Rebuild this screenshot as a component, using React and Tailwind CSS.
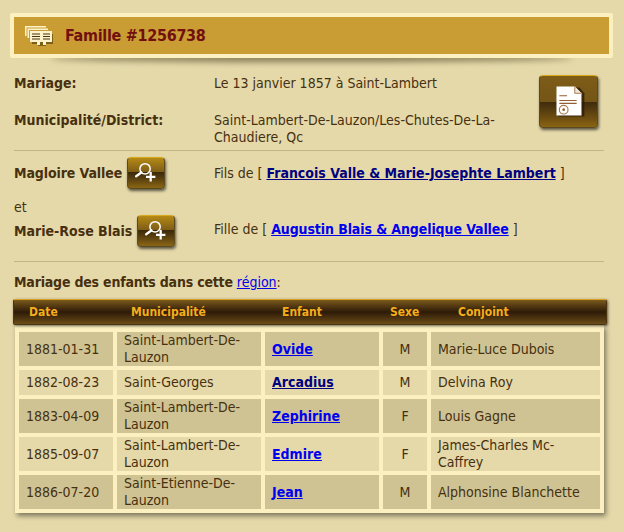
const font = { fontFamily: "'DejaVu Sans Condensed', 'DejaVu Sans', sans-serif" };

const enfants = [
  { date: "1881-01-31", lieu: "Saint-Lambert-De-Lauzon", nom: "Ovide", sexe: "M", conjoint: "Marie-Luce Dubois" },
  { date: "1882-08-23", lieu: "Saint-Georges", nom: "Arcadius", sexe: "M", conjoint: "Delvina Roy", visited: true },
  { date: "1883-04-09", lieu: "Saint-Lambert-De-Lauzon", nom: "Zephirine", sexe: "F", conjoint: "Louis Gagne" },
  { date: "1885-09-07", lieu: "Saint-Lambert-De-Lauzon", nom: "Edmire", sexe: "F", conjoint: "James-Charles Mc-Caffrey" },
  { date: "1886-07-20", lieu: "Saint-Etienne-De-Lauzon", nom: "Jean", sexe: "M", conjoint: "Alphonsine Blanchette" },
];

function ZoomButton() {
  return (
    <span className="relative inline-block h-[32px] w-[38px] shrink-0 overflow-hidden rounded-[4px] border border-[#5b4a20] border-t-[#d9a91c] bg-gradient-to-b from-[#b58a14] via-[#7a5a16] to-[#5d4310] shadow-[1px_2px_3px_rgba(0,0,0,0.6)]">
      <span className="absolute inset-x-0 bottom-0 h-[16px] bg-gradient-to-b from-[#3a270a] to-[#8a6614]" />
      <svg viewBox="0 0 38 32" className="absolute inset-0 h-full w-full" fill="none" stroke="#fff">
        <circle cx="18" cy="11.5" r="5.5" strokeWidth="1.6" />
        <path d="M14 15.5L8.5 19.5" strokeWidth="2.4" strokeLinecap="round" />
        <path d="M24 15v10M19 20h10" strokeWidth="2.4" />
      </svg>
    </span>
  );
}

function DocButton() {
  return (
    <span className="relative block h-[53px] w-[59px] overflow-hidden rounded-[4px] border border-[#5b4a20] border-t-[#d9a91c] bg-gradient-to-b from-[#7e5c18] to-[#6b4f16] shadow-[1px_2px_3px_rgba(0,0,0,0.6)]">
      <span className="absolute inset-x-0 bottom-0 h-[25px] bg-gradient-to-b from-[#3f2b0c] to-[#8a6412]" />
      <svg viewBox="0 0 59 53" className="absolute inset-0 h-full w-full">
        <path d="M19 12H41L46 18V42H19Z" fill="#2a1a06" opacity="0.75" />
        <path d="M17 11H36L43 18V41H17Z" fill="#fff" />
        <path d="M36 11V18H43" fill="#f1e4d2" stroke="#a87a50" strokeWidth="1" />
        <path d="M20 20.5H28M20 25.5H38M20 28.5H38" stroke="#955f33" strokeWidth="1.2" />
        <circle cx="24.5" cy="35" r="4.5" fill="none" stroke="#a87a50" strokeWidth="1.2" />
        <circle cx="24.5" cy="35" r="1.4" fill="#955f33" />
      </svg>
    </span>
  );
}

function FamilleIcon() {
  return (
    <svg viewBox="0 0 28 20" className="h-[20px] w-[28px] shrink-0">
      <path d="M7 8H28V18H21V20H13V18H7Z" fill="#5d4413" opacity="0.7" />
      <path d="M0 0H21V1.5H1.5V10H0Z" fill="#fdf3cb" />
      <path d="M2.5 2.5H23V4H4V12H2.5Z" fill="#fdf3cb" />
      <path d="M5 5H27V16H21V19H18V16H15V19H12V16H5Z" fill="#fdf3cb" />
      <path d="M7 8H15M18 8H25M7 10.5H15M18 10.5H25M7 13H15M18 13H25" stroke="#4a3510" strokeWidth="1" />
    </svg>
  );
}

export default function App() {
  return (
    <div style={font} className="h-[532px] w-[624px] overflow-hidden bg-[#e5d9aa] pt-[13px] text-[14px] leading-[17px] text-[#47300f]">
      <div className="relative mx-[10px] w-[603px]">
        <div className="absolute inset-x-[40px] -bottom-[4px] h-[8px] rounded-[50%] bg-[#5d5230] opacity-70 blur-[3px]" />
        <div className="relative flex h-[45px] items-center rounded-[2px] border-[4px] border-[#fcf0c0] bg-[#c99d33] pl-[11px]">
          <FamilleIcon />
          <span className="ml-[12px] text-[16px] font-bold tracking-[-0.3px] text-[#72100f]">Famille #1256738</span>
        </div>
      </div>

      <div className="relative mx-[14px] mt-[17px] w-[590px]">
        <div className="absolute right-[6px] top-0">
          <DocButton />
        </div>
        <div className="flex">
          <span className="w-[200px] font-bold">Mariage:</span>
          <span>Le 13 janvier 1857 à Saint-Lambert</span>
        </div>
        <div className="mt-[20px] flex">
          <span className="w-[200px] font-bold">Municipalité/District:</span>
          <span className="w-[300px]">Saint-Lambert-De-Lauzon/Les-Chutes-De-La-Chaudiere, Qc</span>
        </div>
        <div className="mt-[4px] border-t border-[#c2b585]" />

        <div className="mt-[6px] flex items-center">
          <span className="flex w-[200px] items-center gap-[5px] font-bold tracking-[-0.1px]">
            Magloire Vallee
            <ZoomButton />
          </span>
          <span>
            Fils de [ <a href="#" className="font-bold text-[#000080] underline">Francois Valle &amp; Marie-Josephte Lambert</a> ]
          </span>
        </div>
        <div className="mt-[10px]">et</div>
        <div className="-mt-[1px] flex items-center">
          <span className="flex w-[200px] items-center gap-[5px] font-bold">
            Marie-Rose Blais
            <ZoomButton />
          </span>
          <span className="-mt-[4px]">
            Fille de [ <a href="#" className="font-bold tracking-[-0.1px] text-[#0000ee] underline">Augustin Blais &amp; Angelique Vallee</a> ]
          </span>
        </div>
        <div className="mt-[14px] border-t border-[#c2b585]" />

        <p className="mt-[12px]">
          <span className="font-bold tracking-[-0.2px]">Mariage des enfants dans cette</span>{" "}
          <a href="#" className="text-[#0000ee] underline">région</a>:
        </p>
      </div>

      <div className="relative mx-[13px] mt-[8px] w-[594px]">
        <div className="relative z-10 flex h-[26px] items-center rounded-[2px] border border-[#4a3410] border-t-[#d9a022] bg-gradient-to-b from-[#7c5a1c] via-[#2e1b08] to-[#6b4d18] text-[12px] font-bold text-[#f5ae1a] shadow-[1px_1px_3px_rgba(0,0,0,0.6)]">
          <span className="w-[117px] pl-[15px]">Date</span>
          <span className="w-[151px]">Municipalité</span>
          <span className="w-[108px]">Enfant</span>
          <span className="w-[68px]">Sexe</span>
          <span>Conjoint</span>
        </div>
        <div className="mx-[2px] w-[589px] bg-[#fcf0c0] pt-[3px] shadow-[2px_3px_5px_rgba(0,0,0,0.45)]">
          <table className="w-full table-fixed border-separate border-spacing-[4px] text-[14px]">
            <colgroup>
              <col className="w-[94px]" />
              <col className="w-[144px]" />
              <col className="w-[114px]" />
              <col className="w-[44px]" />
              <col />
            </colgroup>
            <tbody>
              {enfants.map((e, i) => (
                <tr key={e.date} className={i % 2 === 0 ? "bg-[#cfc393]" : "bg-[#e5d9aa]"}>
                  <td className="h-[25px] px-[7px]">{e.date}</td>
                  <td className="h-[25px] px-[7px]">{e.lieu}</td>
                  <td className="h-[25px] px-[7px]">
                    <a href="#" className={`font-bold underline ${e.visited ? "text-[#000080]" : "text-[#0000ee]"}`}>{e.nom}</a>
                  </td>
                  <td className="h-[25px] text-center">{e.sexe}</td>
                  <td className="h-[25px] px-[7px]">{e.conjoint}</td>
                </tr>
              ))}
            </tbody>
          </table>
        </div>
      </div>
    </div>
  );
}
